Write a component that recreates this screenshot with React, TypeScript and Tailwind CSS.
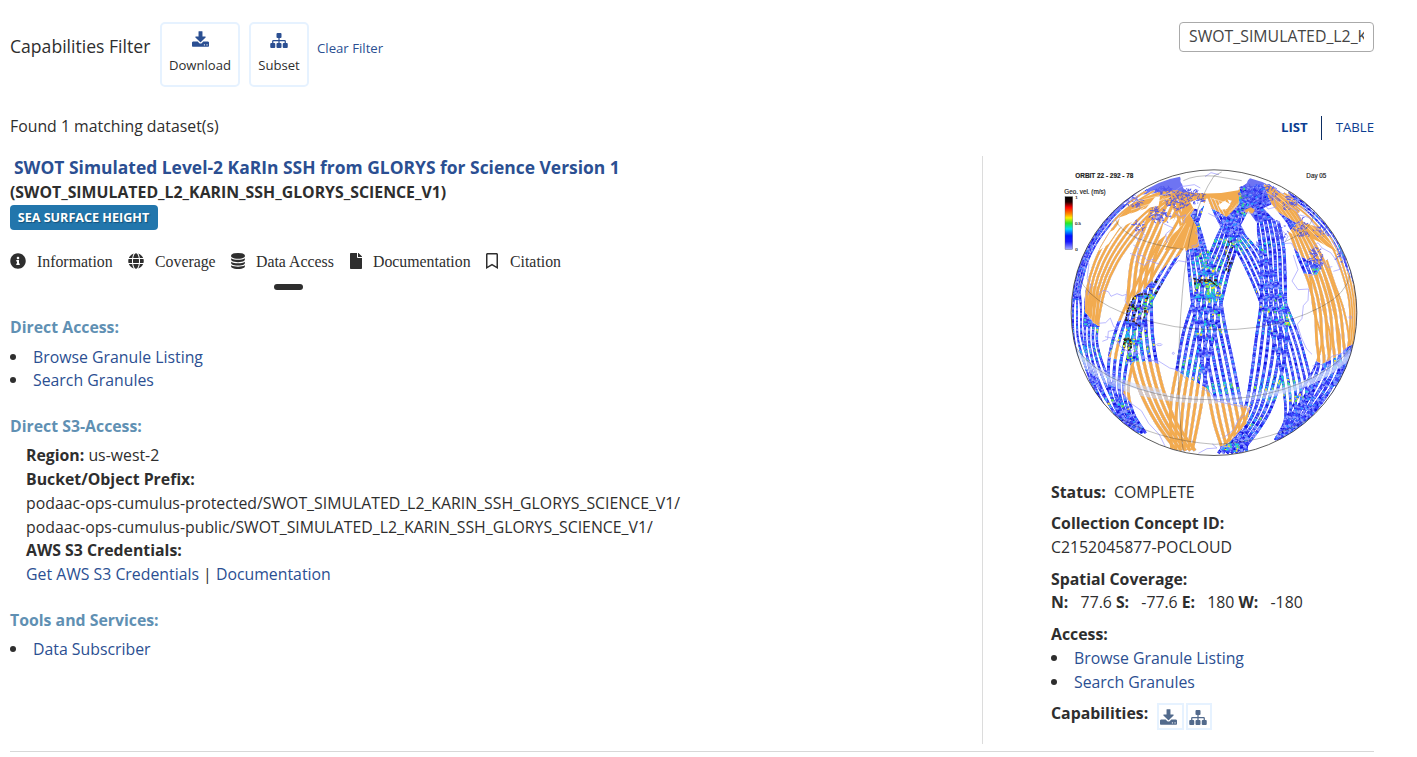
import React from "react";
import { FaInfoCircle, FaGlobe, FaFile, FaRegBookmark } from "react-icons/fa";

function DownloadIcon({ className }: { className: string }) {
  return (
    <svg viewBox="0 0 1664 1536" className={className} fill="currentColor">
      <path d="M1280 1344q0-26-19-45t-45-19-45 19-19 45 19 45 45 19 45-19 19-45zM1536 1344q0-26-19-45t-45-19-45 19-19 45 19 45 45 19 45-19 19-45zM1664 1120v320q0 40-28 68t-68 28h-1472q-40 0-68-28t-28-68v-320q0-40 28-68t68-28h465l135 136q58 56 136 56t136-56l136-136h464q40 0 68 28t28 68zM1339 551q17 41-14 70l-448 448q-18 19-45 19t-45-19l-448-448q-31-29-14-70 17-39 59-39h256v-448q0-26 19-45t45-19h256q26 0 45 19t19 45v448h256q42 0 59 39z" />
    </svg>
  );
}

function SitemapIcon({ className }: { className: string }) {
  return (
    <svg viewBox="0 0 1792 1536" className={className} fill="currentColor">
      <rect x="640" y="0" width="512" height="512" rx="96" />
      <rect x="0" y="1024" width="512" height="512" rx="96" />
      <rect x="640" y="1024" width="512" height="512" rx="96" />
      <rect x="1280" y="1024" width="512" height="512" rx="96" />
      <path d="M832 480h128v576h-128zM192 1056V832q0-128 128-128h1152q128 0 128 128v224h-128V832H320v224z" />
    </svg>
  );
}

function DatabaseIcon({ className }: { className: string }) {
  return (
    <svg viewBox="0 0 1536 1792" className={className} fill="currentColor">
      <path d="M768 768q237 0 443-43t325-127v170q0 69-103 128t-280 93.500-385 34.500-385-34.500-280-93.500-103-128v-170q119 84 325 127t443 43zM768 1536q237 0 443-43t325-127v170q0 69-103 128t-280 93.500-385 34.500-385-34.500-280-93.500-103-128v-170q119 84 325 127t443 43zM768 1152q237 0 443-43t325-127v170q0 69-103 128t-280 93.500-385 34.500-385-34.500-280-93.500-103-128v-170q119 84 325 127t443 43zM768 0q208 0 385 34.500t280 93.500 103 128v128q0 69-103 128t-280 93.500-385 34.500-385-34.500-280-93.500-103-128v-128q0-69 103-128t280-93.500 385-34.500z" />
    </svg>
  );
}

// Each swath is a list of [y, leftX, rightX] stations along the satellite track.
type Swath = { n: number; w: number; s: number[][] };
const swaths: Swath[] = [
  { n: 6, w: 9, s: [[85, 560, 590], [160, 515, 570], [260, 475, 545], [340, 440, 520], [430, 413, 498], [520, 385, 478], [620, 367, 455], [740, 347, 438], [870, 350, 412]] },
  { n: 6, w: 9, s: [[110, 380, 410], [180, 388, 425], [270, 397, 455], [350, 404, 482], [430, 413, 498], [500, 425, 510], [600, 440, 532], [700, 460, 552], [790, 478, 570], [875, 505, 575]] },
  { n: 6, w: 7.5, s: [[110, 460, 510], [180, 490, 545], [270, 545, 620], [350, 585, 660], [430, 618, 692], [520, 650, 728], [600, 672, 752], [700, 688, 772], [780, 690, 750], [840, 660, 700]] },
  { n: 6, w: 9, s: [[80, 555, 615], [140, 595, 655], [250, 615, 684], [340, 620, 690], [430, 618, 692], [540, 603, 694], [640, 590, 680], [740, 572, 650], [810, 540, 610], [880, 490, 555]] },
  { n: 6, w: 8.5, s: [[75, 600, 640], [150, 660, 715], [220, 705, 760], [290, 730, 800], [370, 762, 832], [450, 780, 855], [540, 785, 865], [620, 790, 870], [700, 755, 835], [780, 700, 770], [835, 665, 710]] },
  { n: 4, w: 6, s: [[300, 755, 815], [370, 768, 838], [450, 776, 866], [540, 800, 882], [620, 780, 875], [700, 735, 815], [780, 690, 750]] },
  { n: 4, w: 5.5, s: [[100, 660, 700], [160, 750, 790], [240, 820, 855], [320, 855, 885], [420, 882, 903], [520, 884, 903], [600, 868, 888], [680, 825, 850]] },
  { n: 6, w: 7.5, s: [[100, 310, 385], [160, 215, 305], [230, 158, 240], [310, 118, 185], [390, 96, 150], [470, 90, 132], [500, 88, 130]] },
  { n: 4, w: 7, s: [[380, 100, 128], [450, 94, 128], [500, 90, 127], [560, 92, 128], [650, 110, 158], [740, 148, 203], [810, 200, 250]] },
  { n: 5, w: 8.5, s: [[110, 395, 450], [190, 345, 425], [270, 300, 378], [350, 255, 330], [430, 216, 286], [510, 183, 258], [600, 162, 235], [690, 165, 220], [760, 190, 235], [820, 230, 272]] },
  { n: 5, w: 9.5, s: [[120, 300, 380], [200, 270, 340], [290, 234, 300], [370, 222, 288], [450, 218, 289], [530, 219, 293], [610, 230, 305], [700, 258, 328], [790, 305, 365], [872, 365, 420]] },
  { n: 3, w: 6, s: [[400, 58, 75], [450, 54, 78], [530, 56, 80], [600, 70, 100], [680, 98, 130], [760, 145, 180], [820, 190, 225]] },
  { n: 4, w: 5, s: [[90, 230, 300], [150, 165, 210], [220, 115, 145], [290, 82, 104], [360, 62, 82], [420, 54, 70]] },
  { n: 3, w: 8, s: [[105, 340, 370], [160, 365, 390], [220, 385, 415], [290, 400, 430]] },
];

function trackPath(sw: Swath, i: number) {
  const t = i / (sw.n - 1);
  const p = sw.s.map(([y, a, b]) => [a + (b - a) * t, y]);
  let d = `M${p[0][0].toFixed(1)} ${p[0][1]}`;
  for (let k = 0; k < p.length - 1; k++) {
    const p0 = p[Math.max(0, k - 1)], p1 = p[k], p2 = p[k + 1], p3 = p[Math.min(p.length - 1, k + 2)];
    const c = [p1[0] + (p2[0] - p0[0]) / 6, p1[1] + (p2[1] - p0[1]) / 6, p2[0] - (p3[0] - p1[0]) / 6, p2[1] - (p3[1] - p1[1]) / 6];
    d += `C${c.map((v) => v.toFixed(1)).join(" ")} ${p2[0].toFixed(1)} ${p2[1]}`;
  }
  return d;
}

const tracks = swaths.flatMap((sw) => Array.from({ length: sw.n }, (_, i) => ({ d: trackPath(sw, i), w: sw.w })));

let seed = 17;
function rnd() {
  seed = (seed * 16807) % 2147483647;
  return seed / 2147483647;
}
const dashSets = ["#5f6aff", "#8c9aff", "#1010dc", "#3590ff", "#3c40fc", "#8f9cff"].map((color) =>
  ({ color, dashes: tracks.map(() => Array.from({ length: 12 }, (_, k) => (k % 2 ? 8 + rnd() * 20 : 2 + rnd() * 6).toFixed(1)).join(" ")) })
);

// Energetic areas: centre, spread, number of specks and palette.
const vivid = ["#18d8dc", "#30e8a0", "#60e840", "#f4ee28", "#18c8e8", "#1ea4ff"];
const dark = ["#1c1512", "#5b1f14", "#221a14", "#e06a18", "#f4ee28", "#40e060"];
const spots: [number, number, number, number, number, string[]][] = [
  [455, 350, 55, 80, 170, vivid], [445, 362, 45, 12, 26, dark], [520, 290, 14, 60, 34, dark], [478, 395, 26, 28, 56, vivid],
  [245, 435, 34, 45, 70, dark], [215, 550, 13, 22, 70, dark], [280, 420, 22, 24, 40, vivid], [230, 555, 65, 60, 150, vivid],
  [400, 630, 40, 45, 75, vivid], [495, 682, 50, 18, 70, vivid], [650, 668, 70, 24, 90, vivid], [505, 245, 50, 16, 42, vivid],
  [590, 255, 60, 22, 48, vivid], [640, 440, 80, 90, 60, vivid], [450, 520, 60, 80, 60, vivid], [790, 325, 22, 22, 34, vivid],
  [100, 580, 45, 28, 48, vivid], [680, 700, 75, 24, 65, vivid], [445, 175, 32, 45, 32, vivid], [555, 120, 22, 45, 28, vivid],
  [120, 470, 35, 50, 36, vivid], [580, 765, 40, 35, 36, vivid], [825, 600, 38, 28, 26, vivid], [700, 480, 12, 28, 16, vivid],
  [860, 280, 16, 32, 26, vivid], [520, 860, 36, 14, 24, vivid], [300, 380, 22, 24, 20, dark], [190, 700, 50, 90, 30, vivid],
];
const specks = spots.flatMap(([x, y, rx, ry, n, pal]) =>
  Array.from({ length: n }, () => {
    const a = rnd() * 6.283, q = Math.sqrt(rnd());
    return { x: x + Math.cos(a) * rx * q, y: y + Math.sin(a) * ry * q, w: 3 + rnd() * 5, h: 3 + rnd() * 4, c: pal[Math.floor(rnd() * pal.length)] };
  })
);

const landPath =
  "M180 175L250 95L320 90L390 90L430 130L405 165L425 200L432 258L400 268L350 300L305 345L270 385L235 410L215 455L200 480L135 500L118 490L90 455L92 370L110 290z" +
  "M385 100L555 82L550 135L515 170L480 150L430 130z" +
  "M220 625L235 605L290 605L350 625L455 685L480 720L585 742L575 790L520 850L430 885L330 870L290 820L250 760L205 700z" +
  "M625 70L700 100L750 150L830 235L905 390L910 545L875 562L845 590L800 612L765 590L735 510L745 440L720 380L735 340L785 345L800 320L740 290L690 230L725 190L660 150L640 110z" +
  "M160 590L185 540L198 560L190 600z";

const coasts = [
  "M88 300l14 12-6 44 12 20-10 30M130 405l14-14 16 4 8 14 18-8 16 6 12-4-4 20 10 14M130 490l22-2 14-14 10 26 14 8-30 6-2 24-16 6M150 530l28 6 20 26 24 14 14-8 24 20 22 12 30 4 32 20 26 6 22 26",
  "M300 380l12-16 18-18 10-22 18-10 12-12 24 4 14-8-12-10 22-14-8-16 16-4 10-24-16-12M235 255l16 10-4 18 20 6 10 14 22-6M225 280l20 8 2 18 22 10 18-12 26 8M238 225l22-12 10 14-18 18z",
  "M205 700l20 28 34 24 22 38 32 34 18 36M440 685l28 14 12 22 36 10 60 12 4 14M430 880l26-14 30-2-14-12",
  "M290 180l20-12 14 22 30 14-22 18 4 26M360 160l18 10 14-6-6 26M460 160l24 12 18 38 12-34M570 145l20-10 16 12-12 14-24-4zM625 95l30 14 8 32-24 6-18-24z",
  "M675 205l24 24-12 22 22-2 14 24M715 285l14 44-18 34 18 26 32-2-2 34-14 16-4 38-14 18 12 40 16 34 16 16M775 260l14-12 12 16 26 14 16 22 12 28-20 6M760 350l24-12 20-34 14 18 14-2",
  "M880 560l-18 20-30 8-24 24-36 6M570 765l-20 14-14 30-30 24M450 50l18-12 24 6M350 100l28-20 40-6 18 10",
  "M700 140l24 12 14 28-10 14 26 16M735 165l28 8 18 28 22 18M830 245l28 26 6 30M180 150l30-24 38-16M165 180l-22 40",
];

// Short strokes for the sea-ice and archipelago detail around the Arctic.
const arcticAreas: [number, number, number, number, number][] = [
  [315, 165, 30, 30, 60], [370, 125, 32, 24, 60], [400, 100, 24, 14, 30], [330, 95, 34, 14, 40], [620, 100, 50, 26, 80],
  [700, 125, 26, 26, 40], [740, 205, 22, 30, 36], [785, 300, 22, 34, 70], [425, 110, 20, 22, 30], [250, 200, 24, 18, 20],
  [860, 285, 16, 30, 30], [800, 215, 24, 20, 20], [575, 95, 20, 22, 40], [240, 125, 34, 16, 30], [680, 215, 20, 24, 20],
];
const scribbles = arcticAreas.flatMap(([x, y, rx, ry, n]) =>
  Array.from({ length: n }, () => {
    const a = rnd() * 6.283, q = Math.sqrt(rnd());
    const px = x + Math.cos(a) * rx * q, py = y + Math.sin(a) * ry * q;
    return `M${px.toFixed(1)} ${py.toFixed(1)}l${(rnd() * 16 - 8).toFixed(1)} ${(rnd() * 12 - 6).toFixed(1)}l${(rnd() * 12 - 6).toFixed(1)} ${(rnd() * 10 - 5).toFixed(1)}`;
  })
);

function GlobeFigure() {
  return (
    <svg viewBox="0 0 930 900" className="block h-[300px] w-[310px]" fontFamily="Liberation Sans, sans-serif">
      <defs>
        <clipPath id="disc"><circle cx="477" cy="458" r="428" /></clipPath>
        <clipPath id="land"><path d={landPath} /></clipPath>
        <clipPath id="ice"><path clipRule="evenodd" d="M0 0H930V900H0zM376 62a101 31 0 1 0 202 0a101 31 0 1 0-202 0" /></clipPath>
        <mask id="cover">
          <g fill="none" stroke="#fff">{tracks.map((t, i) => <path key={i} d={t.d} strokeWidth={t.w} />)}</g>
        </mask>
        <linearGradient id="scale" x1="0" y1="0" x2="0" y2="1">
          <stop offset="0" stopColor="#000" /><stop offset=".1" stopColor="#200" /><stop offset=".2" stopColor="#f00" />
          <stop offset=".33" stopColor="#ff9000" /><stop offset=".4" stopColor="#fff000" /><stop offset=".5" stopColor="#28e828" />
          <stop offset=".61" stopColor="#00dfff" /><stop offset=".74" stopColor="#0010ff" /><stop offset=".85" stopColor="#1818ff" /><stop offset="1" stopColor="#a8b0ff" />
        </linearGradient>
      </defs>
      <g clipPath="url(#disc)">
        <g clipPath="url(#ice)">
          <path d="M250 105Q310 60 375 50L385 85L430 125L425 180L405 150L395 110L340 105L300 100zM550 90L585 55Q670 75 740 150L690 170L660 130L655 180L590 190L565 150L530 190L510 170z" fill="#6e74f2" />
          <path d="M65 350Q95 210 200 130L212 134Q115 220 80 330z" fill="#7b83f4" />
          <g fill="none" stroke="#3237f2">{tracks.map((t, i) => <path key={i} d={t.d} strokeWidth={t.w} />)}</g>
          {dashSets.map((set) => (
            <g key={set.color} fill="none" stroke={set.color}>
              {tracks.map((t, i) => <path key={i} d={t.d} strokeWidth={t.w - 1} strokeDasharray={set.dashes[i]} />)}
            </g>
          ))}
          <g mask="url(#cover)">{specks.map((s, i) => <rect key={i} x={s.x} y={s.y} width={s.w} height={s.h} fill={s.c} />)}</g>
          <g clipPath="url(#land)" fill="none">
            <g stroke="#fff">{tracks.map((t, i) => <path key={i} d={t.d} strokeWidth={t.w + 1.5} />)}</g>
            <g stroke="#f2ab50">{tracks.map((t, i) => <path key={i} d={t.d} strokeWidth={t.w} />)}</g>
          </g>
          <path d="M225 135Q300 90 365 90L400 103L380 120L320 112L260 145L190 175zM388 95Q470 108 555 90L550 128L515 118L500 128L470 112L430 122zM350 225L380 200L425 215L430 262L380 265L330 270zM640 100Q690 110 735 155L725 162L700 140L665 130zM738 185L785 200L820 240L845 275L800 250L770 235zM568 150l20-8 12 8-8 12-22-4z" fill="#f2ab50" />
          <path d="M405 125l28-8 18 14-16 20-20-6zM490 135l18-12 18 10-10 14-18 2zM436 195l28-37 32 44-38 72zM558 195l22-42 26 36-2 66-28-26zM625 145l25-12 50 62-44-18zM195 172l92-32-48 42-54 26zM300 112l15-3-4 28-38 8zM670 175l24 14 20 34-26-16zM325 190l34-18-14 42-34 28zM165 215l30-14-34 50-30 22z" fill="#fff" />
          <path d={scribbles.join("")} fill="none" stroke="#4f55ee" strokeWidth="3" opacity=".85" />
          <g stroke="#fff" strokeWidth="2" opacity=".7" fill="none">
            <path d="M405 200L385 262M392 190L350 262M380 195L318 262M430 125L385 180M550 130L520 160M470 115L520 130M640 100L700 150M650 95L725 155M228 150L345 112M240 125L350 98M745 190L840 285M755 185L850 275" />
          </g>
        </g>
        <path d="M68 590Q150 680 300 705Q470 738 650 700Q800 670 890 575" fill="none" stroke="#c4d4fb" strokeWidth="22" opacity=".7" mask="url(#cover)" />
        <path d="M62 575Q150 670 320 695M640 700Q800 675 888 585" fill="none" stroke="#c9d7fb" strokeWidth="14" opacity=".5" />
        <g fill="none" stroke="#9995ff" strokeWidth="2">
          {coasts.map((d) => <path key={d} d={d} />)}
          <ellipse cx="313" cy="554" rx="8" ry="3" /><circle cx="355" cy="580" r="3" /><circle cx="886" cy="472" r="4" />
        </g>
        <path d="M213 480q4-45 28-72 20-10 42-4M205 538l20-2 4 26-8 8M210 480l26 4 22 18M415 355l18 5 30 0 24 18M518 285l6 26-14 24" fill="none" stroke="#2f1d18" strokeWidth="4" strokeDasharray="9 3 5 4" />
        <g fill="none" stroke="#333" strokeOpacity=".55" strokeWidth="1.800">
          <path d="M182 180Q210 245 385 268M690 245Q780 205 775 155" />
          <path d="M72 350Q110 455 360 500Q620 535 800 440Q875 400 885 345" />
          <path d="M52 545Q120 670 360 713Q600 740 780 650Q880 595 904 535" />
          <path d="M180 765Q300 840 480 853Q660 845 780 765" />
          <path d="M477 48Q400 160 382 400Q358 680 385 875M477 48L560 62M477 48Q420 44 385 62M477 48L500 36" />
        </g>
      </g>
      <circle cx="477" cy="458" r="428.500" fill="none" stroke="#3b3b3b" strokeWidth="2.500" />
      <g fill="#222" stroke="#222" strokeWidth=".5">
        <text x="61" y="53" fontSize="19" fontWeight="700" textLength="174" lengthAdjust="spacingAndGlyphs">ORBIT 22 - 292 - 78</text>
        <text x="754" y="53" fontSize="19" textLength="60" lengthAdjust="spacingAndGlyphs">Day 05</text>
        <text x="28" y="103" fontSize="19" textLength="124" lengthAdjust="spacingAndGlyphs">Geo. vel. (m/s)</text>
        <text x="61" y="117" fontSize="13">1</text>
        <text x="60" y="195" fontSize="13">0.5</text>
        <text x="61" y="273" fontSize="13">0</text>
      </g>
      <rect x="30" y="110" width="23" height="159" fill="url(#scale)" stroke="#555" strokeWidth="1" />
    </svg>
  );
}

function BulletList({ items, row }: { items: string[]; row: string }) {
  return (
    <ul>
      {items.map((item) => (
        <li key={item} className={`flex items-center ${row}`}>
          <span className="mr-[17px] size-1.5 rounded-full bg-[#2e2e2e]" />
          <a className="text-[#2b4f92]">{item}</a>
        </li>
      ))}
    </ul>
  );
}

function Tab({ icon, label, className }: { icon: React.ReactNode; label: string; className: string }) {
  return (
    <div className={`flex h-6 shrink-0 items-center ${className}`}>
      {icon}
      <span className="pt-0.5 font-['Liberation_Serif',serif] text-[15.840px] leading-6">{label}</span>
    </div>
  );
}

export default function App() {
  return (
    <div className="h-[757px] overflow-hidden bg-white pr-[43px] pl-[10px] font-['Open_Sans',sans-serif] text-[15.840px] leading-6 whitespace-nowrap text-[#2e2e2e]">
      <header className="flex h-[112px] items-start pt-[22px]">
        <h2 className="mt-3 w-[150px] text-[17.600px] leading-6">Capabilities Filter</h2>
        <button className="flex h-[65px] w-[80px] flex-col items-center rounded-[5px] border-2 border-[#e6f2ff] pt-[7px]">
          <DownloadIcon className="h-4 w-[17px] text-[#2b4f92]" />
          <span className="mt-2 text-[13.100px] leading-5">Download</span>
        </button>
        <button className="ml-[9px] flex h-[65px] w-[60px] flex-col items-center rounded-[5px] border-2 border-[#e6f2ff] pt-[9px]">
          <SitemapIcon className="h-[15px] w-[18px] text-[#2b4f92]" />
          <span className="mt-[7px] text-[13.100px] leading-5">Subset</span>
        </button>
        <a className="mt-4 ml-2 text-[13.200px] leading-5 text-[#2b4f92]">Clear Filter</a>
        <input
          className="ml-auto h-[30px] w-[195px] rounded border border-[#aaa] px-[9px] pb-0.5 text-[15.840px] text-[#444] outline-none"
          defaultValue="SWOT_SIMULATED_L2_KARIN_SSH_GLORYS_SCIENCE_V1"
        />
      </header>

      <div className="flex h-[44px] items-start justify-between">
        <p className="mt-[2px]">Found 1 matching dataset(s)</p>
        <div className="mt-1 flex h-6 items-center text-[13.200px] text-[#0b3d91]">
          <b className="-mt-0.5">LIST</b>
          <span className="mr-[14px] ml-[13px] h-6 w-px bg-[#0b2d63]" />
          <span className="-mt-0.5">TABLE</span>
        </div>
      </div>

      <main className="flex h-[588px]">
        <section className="w-[972px]">
          <h1 className="h-6 pl-1 text-[17.440px] leading-[23px] font-bold text-[#2b4f92]">SWOT Simulated Level-2 KaRIn SSH from GLORYS for Science Version 1</h1>
          <h3 className="font-bold">(SWOT_SIMULATED_L2_KARIN_SSH_GLORYS_SCIENCE_V1)</h3>
          <span className="mt-px flex h-[25px] w-[148px] items-center justify-center rounded bg-[#2276ac] pr-px text-[12.600px] font-bold text-white [text-shadow:1px_1px_1px_#15527a]">SEA SURFACE HEIGHT</span>

          <nav className="mt-[19px] flex">
            <Tab className="w-[118px]" label="Information" icon={<FaInfoCircle className="mr-[11px] size-4" />} />
            <Tab className="w-[103px]" label="Coverage" icon={<FaGlobe className="mr-[11px] size-4" />} />
            <Tab className="w-[119px]" label="Data Access" icon={<DatabaseIcon className="mr-[11px] h-4 w-[14px]" />} />
            <Tab className="w-[136px]" label="Documentation" icon={<FaFile className="mr-[11px] h-4 w-3" />} />
            <Tab className="w-[80px]" label="Citation" icon={<FaRegBookmark className="mr-[12px] h-4 w-3" />} />
          </nav>
          <div className="mt-[11px] ml-[264px] h-1.5 w-[29px] rounded-sm bg-[#2e2e2e]" />

          <h4 className="mt-[25px] mb-[6px] font-bold text-[#6090b3]">Direct Access:</h4>
          <BulletList row="h-[23px]" items={["Browse Granule Listing", "Search Granules"]} />

          <h4 className="mt-[23px] mb-[5px] font-bold text-[#6090b3]">Direct S3-Access:</h4>
          <div className="pl-4">
            <p><b>Region:</b> us-west-2</p>
            <p><b>Bucket/Object Prefix:</b></p>
            <p>podaac-ops-cumulus-protected/SWOT_SIMULATED_L2_KARIN_SSH_GLORYS_SCIENCE_V1/</p>
            <p className="h-[23px]">podaac-ops-cumulus-public/SWOT_SIMULATED_L2_KARIN_SSH_GLORYS_SCIENCE_V1/</p>
            <p><b>AWS S3 Credentials:</b></p>
            <p><a className="text-[#2b4f92]">Get AWS S3 Credentials</a> | <a className="text-[#2b4f92]">Documentation</a></p>
          </div>

          <h4 className="mt-[22px] mb-[5px] font-bold text-[#6090b3]">Tools and Services:</h4>
          <BulletList row="h-[23px]" items={["Data Subscriber"]} />
        </section>

        <aside className="flex-1 border-l border-[#dcdcdc] pt-1 pl-[68px]">
          <div className="ml-1 w-[310px]"><GlobeFigure /></div>
          <p className="mt-5"><b>Status:</b>&nbsp; COMPLETE</p>
          <p className="mt-[7px]"><b>Collection Concept ID:</b></p>
          <p>C2152045877-POCLOUD</p>
          <p className="mt-[8px] h-[23px]"><b>Spatial Coverage:</b></p>
          <p className="tracking-[-0.025px]"><b>N:</b>&nbsp;&nbsp; 77.6 <b>S:</b>&nbsp;&nbsp; -77.6 <b>E:</b>&nbsp;&nbsp; 180 <b>W:</b>&nbsp;&nbsp; -180</p>
          <p className="mt-[8px]"><b>Access:</b></p>
          <BulletList row="h-6" items={["Browse Granule Listing", "Search Granules"]} />
          <div className="mt-[7px] flex items-start">
            <b>Capabilities:</b>
            <span className="mt-[2px] ml-[9px] flex size-[27px] items-center justify-center border-2 border-[#e6f2ff] text-[#526a8c]">
              <DownloadIcon className="mr-1 h-4 w-[17px]" />
            </span>
            <span className="mt-[2px] ml-[2px] flex h-[27px] w-[26px] items-center justify-center border-2 border-[#e6f2ff] text-[#526a8c]">
              <SitemapIcon className="mt-0.5 mr-0.5 h-[15px] w-[18px]" />
            </span>
          </div>
        </aside>
      </main>
      <hr className="mt-[7px] border-[#d8d8d8]" />
    </div>
  );
}
